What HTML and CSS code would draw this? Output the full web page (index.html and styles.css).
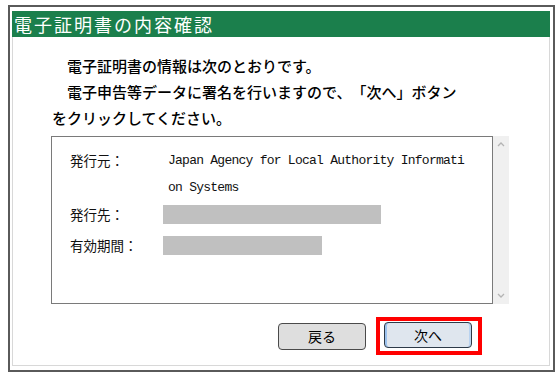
FILE: index.html
```html
<!DOCTYPE html>
<html lang="ja">
<head>
  <meta charset="UTF-8">
  <title>電子証明書の内容確認</title>
  <link rel="stylesheet" href="styles.css">
</head>
<body>

  <div class="dialog">
    <div class="inner">
      <div class="title">電子証明書の内容確認</div>

      <div class="content">
        <p class="msg">電子証明書の情報は次のとおりです。</p>
        <p class="msg">電子申告等データに署名を行いますので、「次へ」ボタンをクリックしてください。</p>

        <div class="listbox">
          <div class="list">
            <div class="row">
              <span class="label">発行元：</span>
              <span class="value text">Japan Agency for Local Authority Information Systems</span>
            </div>
            <div class="row">
              <span class="label">発行先：</span>
              <span class="value"><span class="mask long"></span></span>
            </div>
            <div class="row gap">
              <span class="label">有効期間：</span>
              <span class="value"><span class="mask short"></span></span>
            </div>
          </div>
          <div class="scrollbar">
            <svg width="16" height="16" viewBox="0 0 16 16"><path d="M5 10 L8 7 L11 10" fill="none" stroke="#b4b4b4" stroke-width="1.3"/></svg>
            <svg width="16" height="16" viewBox="0 0 16 16"><path d="M5 6 L8 9 L11 6" fill="none" stroke="#b4b4b4" stroke-width="1.3"/></svg>
          </div>
        </div>

        <div class="buttons">
          <button class="btn">戻る</button>
          <span class="highlight"><button class="btn focus">次へ</button></span>
        </div>
      </div>
    </div>
  </div>

</body>
</html>
```

FILE: styles.css
```css
body {
  margin: 0;
  background: white;
  font-family: "Noto Sans CJK JP", sans-serif;
}
.dialog {
  margin: 5px 0 0 8px;
  width: 538px;
  border: 2px solid #5a5a5a;
  padding: 4px 3px 4px 2px;
}
.inner {
  border: 1px solid #d8d8d8;
  border-top: none;
}
.title {
  background: #1b7f4c;
  color: white;
  height: 26px;
  line-height: 26px;
  font-size: 18px;
  letter-spacing: 2px;
  padding-left: 2px;
  margin: 0 -1px;
}
.content {
  padding: 16px 38px 10px 38px;
}
.msg {
  margin: 0;
  width: 410px;
  font-size: 15px;
  font-weight: 500;
  line-height: 26px;
  text-indent: 15px;
  text-spacing-trim: space-all;
  color: #000;
  padding-left: 1px;
}
.listbox {
  display: flex;
  margin-top: 5px;
  height: 168px;
}
.list {
  width: 440px;
  border: 1px solid #7a7a7a;
  padding-top: 10px;
  font-size: 13.5px;
  color: #111;
}
.row {
  display: flex;
  min-height: 27px;
  line-height: 27px;
}
.row.gap {
  margin-top: 4px;
}
.label {
  width: 93px;
  padding-left: 18px;
}
.value.text {
  width: 300px;
  padding-left: 5px;
  font-family: "Liberation Mono", monospace;
  font-size: 13px;
  letter-spacing: -0.75px;
  word-break: break-all;
}
.mask {
  display: inline-block;
  height: 19px;
  margin-top: 4px;
  background: #c0c0c0;
  vertical-align: top;
}
.mask.long {
  width: 218px;
}
.mask.short {
  width: 159px;
}
.scrollbar {
  width: 16px;
  background: #f0f0f0;
  display: flex;
  flex-direction: column;
  justify-content: space-between;
}
.buttons {
  display: flex;
  justify-content: flex-end;
  align-items: center;
  margin-top: 13px;
  padding-right: 29px;
}
.btn {
  width: 88px;
  height: 27px;
  border: 1px solid #4a4a4a;
  border-radius: 4px;
  background: #dedede;
  font-family: "Noto Sans CJK JP", sans-serif;
  font-size: 14px;
  color: #000;
  padding: 0;
}
.highlight {
  display: inline-block;
  margin-left: 10px;
  border: 4px solid #ff0000;
  padding: 1px 6px 3px 4px;
}
.btn.focus {
  height: 26px;
  background: #dfe6ee;
  border-color: #2d3a48;
  box-shadow: inset 2px 0 0 #9cc2ee, inset -2px 0 0 #b9d3f0;
  display: block;
}
```
